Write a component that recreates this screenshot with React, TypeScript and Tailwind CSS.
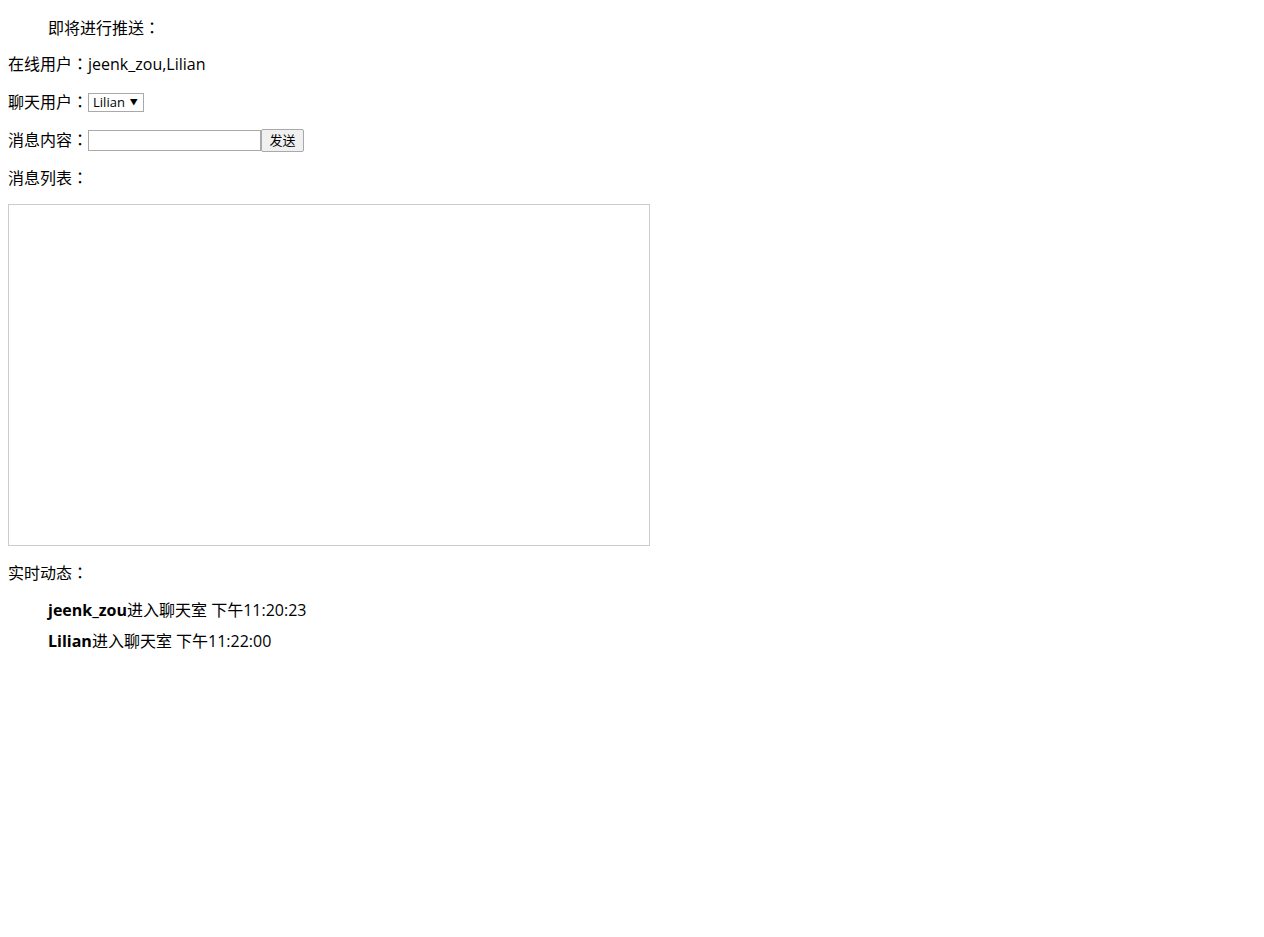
import { useState } from "react"

const font = { fontFamily: '"Open Sans", "Noto Sans CJK SC", sans-serif' }

// 冒号居中的字形
function Colon() {
  return <span className="leading-[0px]" style={{ fontFamily: '"Noto Sans CJK TC", sans-serif' }}>：</span>
}

function App() {
  const [msg, setMsg] = useState("")
  const logs = [
    { user: "jeenk_zou", text: "进入聊天室 下午11:20:23" },
    { user: "Lilian", text: "进入聊天室 下午11:22:00" },
  ]

  return (
    <div className="min-h-[937px] bg-white pl-[8px] text-[16px] text-black" style={font}>
      <div className="pt-[17px] pl-[40px] h-[39px] leading-[22px]">即将进行推送<Colon /></div>

      <div className="mt-[14px] h-[22px] leading-[22px]">在线用户<Colon />jeenk_zou,Lilian</div>

      <div className="mt-[16px] flex items-center h-[22px] leading-[22px]">
        <span>聊天用户<Colon /></span>
        <div className="flex items-center h-[19px] w-[56px] border border-[#a9a9a9] text-[13px] pl-[4px] gap-[5px] leading-none">
          <span>Lilian</span>
          <span className="text-[8px]">▼</span>
        </div>
      </div>

      <div className="mt-[16px] flex items-center h-[22px] leading-[22px]">
        <span>消息内容<Colon /></span>
        <input
          value={msg}
          onChange={(e) => setMsg(e.target.value)}
          className="h-[21px] w-[173px] border border-[#a9a9a9] outline-none px-1 text-[13px]"
        />
        <button className="h-[23px] w-[43px] border border-[#a9a9a9] bg-[#f0f0f0] text-[13px] leading-none rounded-[2px]">
          发送
        </button>
      </div>

      <div className="mt-[16px] h-[22px] leading-[22px]">消息列表<Colon /></div>

      <div className="mt-[15px] w-[642px] h-[342px] border border-[#cccccc]"></div>

      <div className="mt-[16px] h-[22px] leading-[22px]">实时动态<Colon /></div>

      <div className="mt-[15px] pl-[40px] flex flex-col gap-[9px]">
        {logs.map((l, i) => (
          <div key={i} className="h-[22px] leading-[22px]">
            <b>{l.user}</b>
            {l.text}
          </div>
        ))}
      </div>
    </div>
  )
}

export default App
